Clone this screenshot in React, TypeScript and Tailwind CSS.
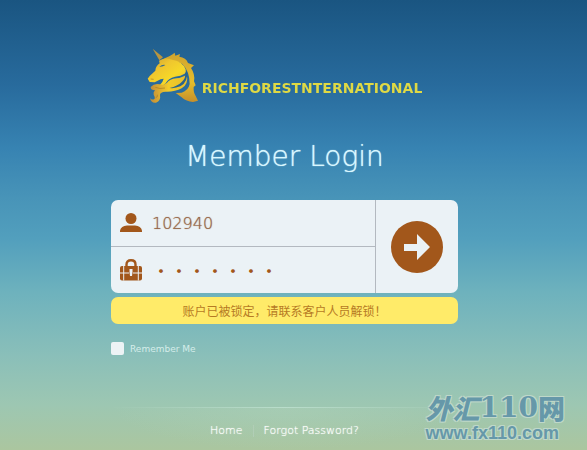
import React, { useState } from 'react';

function UnicornLogo() {
  return (
    <svg viewBox="20 26 153 171" className="h-[57px] w-[51px] shrink-0" aria-hidden="true">
      <defs>
        <linearGradient id="gold" x1="0" y1="0" x2="1" y2="1">
          <stop offset="0" stopColor="#c79c35" />
          <stop offset="0.35" stopColor="#efc62e" />
          <stop offset="0.65" stopColor="#f6d828" />
          <stop offset="1" stopColor="#e6b92a" />
        </linearGradient>
        <linearGradient id="mane" x1="0" y1="0" x2="0" y2="1">
          <stop offset="0" stopColor="#d0a42f" />
          <stop offset="0.6" stopColor="#e6bd2b" />
          <stop offset="1" stopColor="#c68f2a" />
        </linearGradient>
        <linearGradient id="chest" x1="0" y1="0" x2="1" y2="0">
          <stop offset="0" stopColor="#c08b3a" />
          <stop offset="0.5" stopColor="#f2cb2a" />
          <stop offset="1" stopColor="#e6bd2a" />
        </linearGradient>
      </defs>
      <path fill="#b9953f" d="M37 28 L68 54 L57 63 Z" />
      <path
        fill="url(#mane)"
        d="M70 58 Q88 52 97 45 L103 40 L105 49 L119 44 L117 52 Q137 54 143 71 L161 78 L152 86 Q165 105 161 126 L166 138 L160 143 Q159 160 166 170 L173 184 L158 188 Q138 187 124 174 L106 161 L124 160 Q144 154 148 134 Q148 96 126 74 Q108 62 80 66 Z"
      />
      <path
        fill="url(#gold)"
        d="M56 64 Q76 52 98 62 Q126 66 136 90 Q138 98 133 103 Q122 110 104 112 Q84 116 75 133 Q72 138 58 138 Q68 128 70 118 Q60 118 52 124 L43 129 L28 128 L22 118 L28 110 L45 94 Q46 80 58 72 Z"
      />
      <path
        fill="url(#chest)"
        d="M31 143 Q42 131 58 135 Q72 139 80 130 Q88 119 108 117 Q126 116 139 105 Q146 134 124 147 Q104 158 75 157 Q60 158 59 166 Q62 184 47 190 Q32 192 29 176 Q35 184 43 178 Q44 172 40 166 Q38 158 44 153 Q31 153 31 143 Z"
      />
      <path fill="#28638d" d="M140 94 Q144 128 120 141 Q104 148 88 146 Q112 140 124 128 Q137 117 134 104 Z" />
      <path fill="#2d668f" d="M57 82 Q66 75 75 77 Q67 83 57 82 Z" />
      <path fill="none" stroke="#a67b25" strokeWidth="2" d="M45 144 Q58 150 74 146 M46 175 Q53 174 51 166 M31 119 L40 120" />
    </svg>
  );
}

function UserIcon() {
  return (
    <svg viewBox="0 0 22 20" className="h-[20px] w-[22px]" fill="#a2571b" aria-hidden="true">
      <circle cx="11" cy="5.5" r="5.5" />
      <path d="M0 19 V17.5 Q1 13 7 12.5 H15 Q21 13 22 17.5 V19 Z" />
    </svg>
  );
}

function LockIcon() {
  return (
    <svg viewBox="0 0 22 22" className="h-[22px] w-[22px]" aria-hidden="true">
      <path d="M6.5 10 V5.5 Q6.5 1.3 11 1.3 Q15.5 1.3 15.5 5.5 V10" fill="none" stroke="#a2571b" strokeWidth="2.4" />
      <rect x="0" y="7" width="22" height="14.5" rx="2" fill="#a2571b" />
      <path d="M3.7 7 V21.5 M18.3 7 V21.5 M0 14 H9 M13 14 H22" stroke="#ebf2f6" strokeWidth="1" />
      <path d="M9.5 10 H12.5 V13 L12 17 H10 L9.5 13 Z" fill="#ebf2f6" />
    </svg>
  );
}

export default function App() {
  const [account, setAccount] = useState('102940');
  const [password, setPassword] = useState('1234567');
  const [remember, setRemember] = useState(false);

  return (
    <div className="relative flex min-h-screen flex-col items-center bg-[linear-gradient(to_bottom,#1a5581_0%,#286b9d_19%,#3783b2_33%,#4894b8_44%,#529fbd_53%,#6eb2bd_65%,#8abfb9_79%,#9dc7b2_90%,#abc69f_100%)] pr-[18px] font-['DejaVu_Sans','Noto_Sans_CJK_SC',sans-serif]">
      <main className="flex w-full max-w-[347px] flex-col">
        <header className="flex items-center justify-center gap-[4px] pt-[48px]">
          <UnicornLogo />
          <span className="bg-[linear-gradient(to_bottom,#e6dc55_0%,#e6dc55_42%,#93ad72_44%,#93ad72_52%,#dfd944_54%)] bg-clip-text pt-[22px] text-[14px] leading-[20px] font-bold text-transparent">
            RICHFORESTNTERNATIONAL
          </span>
        </header>

        <h1 className="mt-[34px] text-center text-[28px] leading-[36px] font-extralight text-[#d9f7ff] [text-shadow:0_0_1px_#d9f7ff]">
          Member Login
        </h1>

        <form className="mt-[25px]" onSubmit={(e) => e.preventDefault()}>
          <div className="flex overflow-hidden rounded-[7px] bg-[#ebf2f6]">
            <div className="min-w-0 flex-1">
              <div className="flex h-[47px] items-center gap-[10px] border-b border-[#b3b9c0] pl-[9px]">
                <label htmlFor="account" aria-label="Account">
                  <UserIcon />
                </label>
                <input
                  id="account"
                  value={account}
                  onChange={(e) => setAccount(e.target.value)}
                  className="min-w-0 flex-1 bg-transparent pt-[2px] text-[16px] font-extralight text-[#98694a] outline-none [text-shadow:0_0_1px_#98694a]"
                />
              </div>
              <div className="flex h-[46px] items-center gap-[10px] pl-[9px]">
                <label htmlFor="password" aria-label="Password">
                  <LockIcon />
                </label>
                <input
                  id="password"
                  type="password"
                  value={password}
                  onChange={(e) => setPassword(e.target.value)}
                  className="min-w-0 flex-1 bg-transparent font-['Noto_Sans_CJK_SC',sans-serif] text-[18px] text-[#a2571b] outline-none"
                />
              </div>
            </div>
            <button type="submit" aria-label="Log in" className="flex w-[83px] items-center justify-center border-l border-[#b3b9c0]">
              <svg viewBox="0 0 52 52" className="h-[52px] w-[52px]" aria-hidden="true">
                <circle cx="26" cy="26" r="26" fill="#a2571b" />
                <path d="M13 23 H26 V13 L39 26 L26 39 V30 H13 Z" fill="#ebf2f6" />
              </svg>
            </button>
          </div>

          <p role="alert" className="mt-[4px] rounded-[7px] bg-[#ffeb69] text-center font-['Noto_Sans_CJK_SC',sans-serif] text-[12px] leading-[27px] text-[#b67a24]">
            账户已被锁定，请联系客户人员解锁！
          </p>

          <div className="mt-[17px] flex items-center gap-[6px]">
            <input
              id="remember"
              type="checkbox"
              checked={remember}
              onChange={(e) => setRemember(e.target.checked)}
              className="size-[13px] appearance-none rounded-[2px] bg-[#edf3f5] checked:bg-[#a2571b]"
            />
            <label htmlFor="remember" className="pt-[2px] text-[9px] leading-[12px] text-[#d5edea]">
              Remember Me
            </label>
          </div>
        </form>
      </main>

      <footer className="mt-[52px] flex w-full max-w-[347px] flex-col">
        <div className="h-px bg-linear-to-r from-transparent via-[#b9ddcb] to-transparent" />
        <nav className="flex items-center justify-center bg-[radial-gradient(ellipse_at_top,#b1d3b966,transparent_70%)] pt-[14px] pb-[10px] text-[11px] leading-[18px] font-extralight text-white [text-shadow:0_0_1px_#ffffff]">
          <a href="#home" className="pr-[10px]">Home</a>
          <span className="h-[12px] border-l border-[#b1ceb6]" />
          <a href="#forgot" className="pl-[10px]">Forgot Password?</a>
        </nav>
      </footer>

      <div className="absolute right-[22px] bottom-[7px] text-[#6698a9] [text-shadow:1px_1px_0_#bfd8c9,-1px_-1px_0_#bfd8c9,1px_-1px_0_#bfd8c9,-1px_1px_0_#bfd8c9]">
        <div className="flex items-center justify-center text-[27px] leading-[30px] font-black">
          <span className="font-['Noto_Sans_CJK_SC',sans-serif] italic">外汇</span>
          <span className="font-['DejaVu_Serif',serif] text-[28px]">110</span>
          <span className="font-['Noto_Sans_CJK_SC',sans-serif]">网</span>
        </div>
        <div className="font-['Liberation_Sans',sans-serif] text-[18px] leading-[20px] font-bold">www.fx110.com</div>
      </div>
    </div>
  );
}
